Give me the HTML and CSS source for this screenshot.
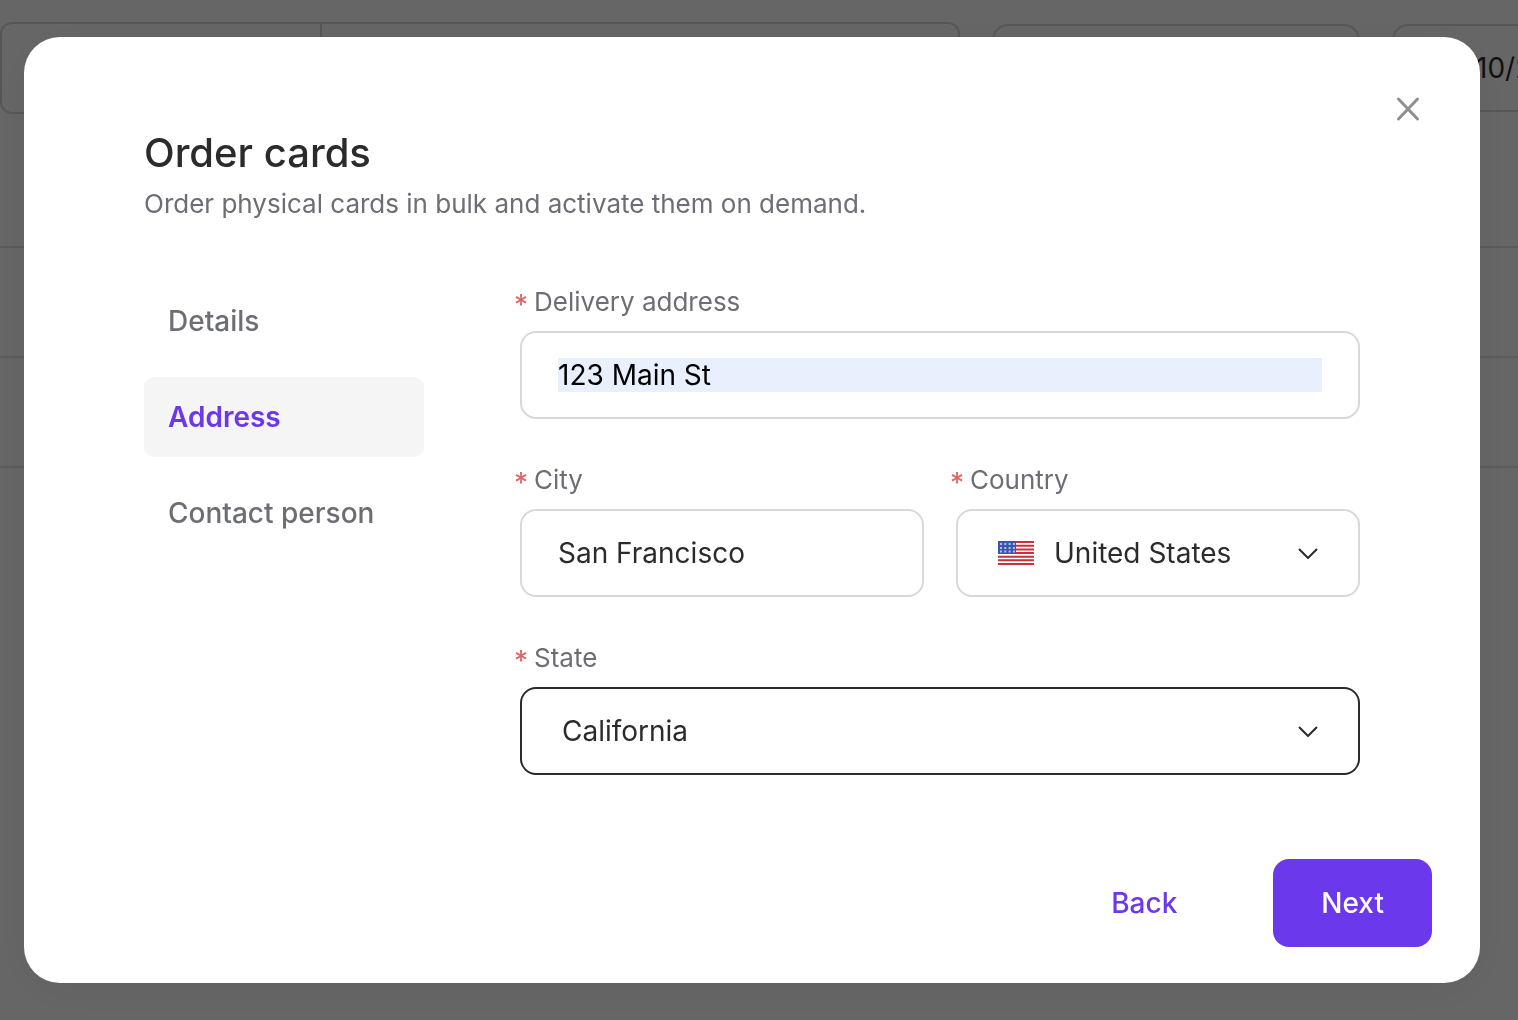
FILE: index.html
```html
<!DOCTYPE html>
<html lang="en">
<head>
<meta charset="utf-8">
<meta name="viewport" content="width=device-width, initial-scale=1">
<title>Order cards</title>
<link rel="stylesheet" href="styles.css">
</head>
<body>
<main class="page" inert>
  <div class="filters">
    <div class="search"><div class="search-type"></div><div class="search-term"></div></div>
    <div class="filter"></div>
    <div class="filter filter-date">10/2</div>
  </div>
  <div class="rows">
    <div class="row"></div>
    <div class="row"></div>
    <div class="row"></div>
  </div>
</main>

<div class="overlay">
  <section class="modal" role="dialog" aria-modal="true" aria-labelledby="modal-title">
    <button class="close" type="button" aria-label="Close">
      <svg viewBox="0 0 48 48" width="48" height="48" fill="none" stroke="currentColor" stroke-width="3" stroke-linecap="round"><path d="M14.500 14l19 20M33.500 14l-19 20"/></svg>
    </button>
    <header class="header">
      <h1 class="title" id="modal-title">Order cards</h1>
      <p class="subtitle">Order physical cards in bulk and activate them on demand.</p>
    </header>
    <div class="content">
      <nav class="steps" aria-label="Steps">
        <a class="step" href="#details">Details</a>
        <a class="step step-active" href="#address" aria-current="step">Address</a>
        <a class="step" href="#contact">Contact person</a>
      </nav>
      <form class="form" id="order-form">
        <div class="field field-wide">
          <label class="label" for="address"><span class="required">*</span>Delivery address</label>
          <div class="control"><input class="input input-filled" id="address" type="text" value="123 Main St"></div>
        </div>
        <div class="field">
          <label class="label" for="city"><span class="required">*</span>City</label>
          <div class="control"><input class="input" id="city" type="text" value="San Francisco"></div>
        </div>
        <div class="field">
          <label class="label" for="country"><span class="required">*</span>Country</label>
          <div class="picker">
            <svg class="flag" viewBox="0 0 36 24" width="36" height="24" aria-hidden="true">
              <path fill="#fff" d="M0 0h36v24H0z"/>
              <path stroke="#c9313a" stroke-width="2" d="M0 1h36M0 4.700h36M0 8.400h36M0 12h36M0 15.700h36M0 19.300h36M0 23h36"/>
              <path fill="#3c55ac" d="M0 0h18v13H0z"/>
              <path stroke="#b4bfe4" stroke-width="2" stroke-dasharray="2 2.300" d="M2 3h15M2 7h15M2 10.500h15"/>
            </svg>
            <select class="select select-flag" id="country"><option>United States</option></select>
            <svg class="chevron" viewBox="0 0 20 12" width="20" height="12" aria-hidden="true"><path d="M1 2l9 9 9-9"/></svg>
          </div>
        </div>
        <div class="field field-wide">
          <label class="label" for="state"><span class="required">*</span>State</label>
          <div class="picker">
            <select class="select select-active" id="state"><option>California</option></select>
            <svg class="chevron" viewBox="0 0 20 12" width="20" height="12" aria-hidden="true"><path d="M1 2l9 9 9-9"/></svg>
          </div>
        </div>
      </form>
    </div>
    <footer class="footer">
      <button class="button" type="button">Back</button>
      <button class="button button-primary" type="submit" form="order-form">Next</button>
    </footer>
  </section>
</div>
</body>
</html>
```
FILE: styles.css
```css
* { box-sizing: border-box; }

body {
  margin: 0;
  background: #fff;
  color: #2b2b2b;
  font-family: Inter, "Liberation Sans", sans-serif;
  font-size: 28px;
}

button, input, select { font: inherit; }

/* Page behind the dialog */
.page {
  min-height: 100vh;
  padding-top: 22px;
  overflow: hidden;
}

.filters {
  display: grid;
  grid-template-columns: 960fr 368fr 126fr;
  gap: 32px;
  align-items: center;
}

.search {
  display: flex;
  height: 92px;
  border: 2px solid #d8d8dc;
  border-radius: 12px;
}

.search-type {
  flex: 1;
  border-right: 2px solid #d8d8dc;
}

.search-term { flex: 2; }

.filter {
  height: 88px;
  border: 2px solid #d8d8dc;
  border-radius: 16px;
}

.filter-date {
  margin-right: -48px;
  padding-left: 82px;
  color: #2b2b2b;
  line-height: 84px;
}

.rows { padding-top: 24px; }

.row {
  height: 110px;
  border-bottom: 2px solid #e4e4e6;
}

/* Dialog */
.overlay {
  position: fixed;
  inset: 0;
  padding: 37px 38px 37px 24px;
  overflow: auto;
  background: rgba(0, 0, 0, 0.6);
}

.modal {
  position: relative;
  padding: 92px 48px 36px 120px;
  background: #fff;
  border-radius: 36px;
  box-shadow: 0 8px 48px rgba(0, 0, 0, 0.06);
}

.close {
  position: absolute;
  top: 48px;
  right: 48px;
  width: 48px;
  height: 48px;
  padding: 0;
  border: 0;
  background: none;
  color: #8f8f8f;
}

.close svg { display: block; }

.title {
  margin: 0 0 11px;
  font-size: 40px;
  font-weight: 500;
  line-height: 48px;
}

.subtitle {
  margin: 0;
  color: #6c6e76;
  font-size: 26px;
  line-height: 32px;
}

.content {
  display: grid;
  grid-template-columns: 280px 1fr;
  gap: 96px;
  padding: 61px 72px 84px 0;
}

.steps {
  display: flex;
  flex-direction: column;
  gap: 16px;
}

.step {
  padding: 0 24px;
  border-radius: 10px;
  color: #6c6e76;
  font-weight: 500;
  line-height: 80px;
  text-decoration: none;
}

.step-active {
  background: #f5f5f6;
  color: #6b38eb;
  font-weight: 600;
}

.form {
  display: grid;
  grid-template-columns: 1fr 1fr;
  gap: 46px 32px;
  padding-top: 6px;
}

.field-wide { grid-column: 1 / -1; }

.label {
  display: flex;
  gap: 6px;
  margin: 0 0 14px -6px;
  color: #6c6e76;
  font-size: 26px;
  line-height: 30px;
}

.required {
  padding-top: 6px;
  color: #e5625e;
  font-size: 28px;
  line-height: 24px;
}

.control {
  display: flex;
  align-items: center;
  height: 88px;
  padding: 0 36px;
  border: 2px solid #d8d8dc;
  border-radius: 16px;
}

.input {
  width: 100%;
  height: 34px;
  padding: 0;
  border: 0;
  outline: 0;
  background: none;
  color: #2b2b2b;
}

.input-filled {
  background: #e8effd;
  color: #000;
}

.picker {
  display: grid;
  align-items: center;
}

.picker > * { grid-area: 1 / 1; }

.select {
  width: 100%;
  height: 88px;
  padding: 0 80px 0 40px;
  border: 2px solid #d8d8dc;
  border-radius: 16px;
  appearance: none;
  background: none;
  color: #2b2b2b;
}

.select-flag { padding-left: 96px; }

.select-active { border-color: #2b2b2b; }

.flag {
  margin-left: 42px;
}

.chevron {
  justify-self: end;
  margin-right: 42px;
  fill: none;
  stroke: #2b2b2b;
  stroke-width: 2;
  pointer-events: none;
}

.footer {
  display: flex;
  justify-content: flex-end;
  gap: 48px;
}

.button {
  height: 88px;
  padding: 0 48px;
  border: 0;
  border-radius: 16px;
  background: none;
  color: #6b38eb;
  font-weight: 500;
}

.button-primary {
  background: #6b38eb;
  color: #fff;
}
```
